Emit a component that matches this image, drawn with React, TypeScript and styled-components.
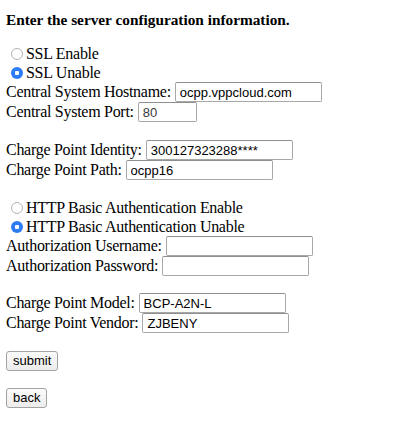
import React, { useState } from "react";
import styled, { createGlobalStyle } from "styled-components";

const GlobalStyle = createGlobalStyle`
    html, body {
        margin: 0;
        padding: 0;
        background: #ffffff;
    }
    body {
        font-family: "Liberation Serif", "Times New Roman", serif;
        font-size: 16px;
        color: #000000;
    }
`

const Page = styled.div`
    padding: 9px 6px 0 6px;
`

const Heading = styled.div`
    font-weight: bold;
    font-size: 15.3px;
    line-height: 19px;
    padding-top: 1px;
    margin-bottom: 15px;
`

const Form = styled.form`
    display: flex;
    flex-direction: column;
    letter-spacing: -0.28px;
`

const RadioRow = styled.label`
    display: flex;
    align-items: center;
    height: 19px;
    line-height: 19px;
    white-space: nowrap;
`

const Radio = styled.input.attrs({ type: "radio" })`
    appearance: none;
    -webkit-appearance: none;
    box-sizing: border-box;
    width: 12px;
    height: 12px;
    margin: 0 3px 0 5px;
    border-radius: 50%;
    border: 1px solid #b4b4b4;
    background: #ffffff;
    flex-shrink: 0;

    &:checked {
        border: none;
        background: radial-gradient(circle, #ffffff 0 2px, #2d7cf6 2.5px);
    }
`

const FieldRow = styled.label`
    display: flex;
    align-items: center;
    height: 20px;
    line-height: 20px;
    white-space: nowrap;
`

const TextInput = styled.input<{ $narrow?: boolean; $muted?: boolean }>`
    box-sizing: border-box;
    width: ${props => props.$narrow ? 59 : 147}px;
    height: 20px;
    margin: 0 0 0 4px;
    padding: 1px 4px;
    border: 1px solid #a8a8a8;
    border-top-color: #8f8f8f;
    border-radius: 2px;
    font-family: "Liberation Sans", Arial, sans-serif;
    font-size: 13px;
    letter-spacing: 0;
    color: ${props => props.$muted ? "#3a3a3a" : "#000000"};
    background: #ffffff;
    outline: none;
`

const Spacer = styled.div<{ $size?: number }>`
    height: ${props => props.$size ?? 18}px;
`

const ButtonRow = styled.div`
    display: flex;
    height: 20px;
`

const Button = styled.button`
    box-sizing: border-box;
    height: 20px;
    padding: 0 6px;
    border: 1px solid #a3a3a3;
    border-radius: 3px;
    background: linear-gradient(#fbfbfb, #ececec);
    font-family: "Liberation Sans", Arial, sans-serif;
    font-size: 13px;
    letter-spacing: 0;
    color: #000000;
    line-height: 18px;
`

type Field = {
    label: string;
    value: string;
    narrow?: boolean;
    muted?: boolean;
}

const serverFields: Field[] = [
    { label: "Central System Hostname:", value: "ocpp.vppcloud.com" },
    { label: "Central System Port:", value: "80", narrow: true, muted: true },
]

const pointFields: Field[] = [
    { label: "Charge Point Identity:", value: "300127323288****" },
    { label: "Charge Point Path:", value: "ocpp16" },
]

const authFields: Field[] = [
    { label: "Authorization Username:", value: "" },
    { label: "Authorization Password:", value: "" },
]

const modelFields: Field[] = [
    { label: "Charge Point Model:", value: "BCP-A2N-L" },
    { label: "Charge Point Vendor:", value: "ZJBENY" },
]

function Fields({ fields }: { fields: Field[] }) {
    return <>
        {fields.map(f => (
            <FieldRow key={f.label}>
                {f.label}
                <TextInput
                    type={f.label.includes("Password") ? "password" : "text"}
                    defaultValue={f.value}
                    $narrow={f.narrow}
                    $muted={f.muted} />
            </FieldRow>
        ))}
    </>
}

export default function App(): JSX.Element {
    const [ssl, setSsl] = useState("unable");
    const [auth, setAuth] = useState("unable");

    return <>
        <GlobalStyle />
        <Page>
            <Heading>Enter the server configuration information.</Heading>
            <Form onSubmit={e => e.preventDefault()}>
                <RadioRow>
                    <Radio name="ssl" checked={ssl === "enable"} onChange={() => setSsl("enable")} />
                    SSL Enable
                </RadioRow>
                <RadioRow>
                    <Radio name="ssl" checked={ssl === "unable"} onChange={() => setSsl("unable")} />
                    SSL Unable
                </RadioRow>
                <Fields fields={serverFields} />
                <Spacer />
                <Fields fields={pointFields} />
                <Spacer />
                <RadioRow>
                    <Radio name="auth" checked={auth === "enable"} onChange={() => setAuth("enable")} />
                    HTTP Basic Authentication Enable
                </RadioRow>
                <RadioRow>
                    <Radio name="auth" checked={auth === "unable"} onChange={() => setAuth("unable")} />
                    HTTP Basic Authentication Unable
                </RadioRow>
                <Fields fields={authFields} />
                <Spacer $size={17} />
                <Fields fields={modelFields} />
                <Spacer />
                <ButtonRow>
                    <Button type="submit">submit</Button>
                </ButtonRow>
                <Spacer $size={17} />
                <ButtonRow>
                    <Button type="button">back</Button>
                </ButtonRow>
            </Form>
        </Page>
    </>;
}
